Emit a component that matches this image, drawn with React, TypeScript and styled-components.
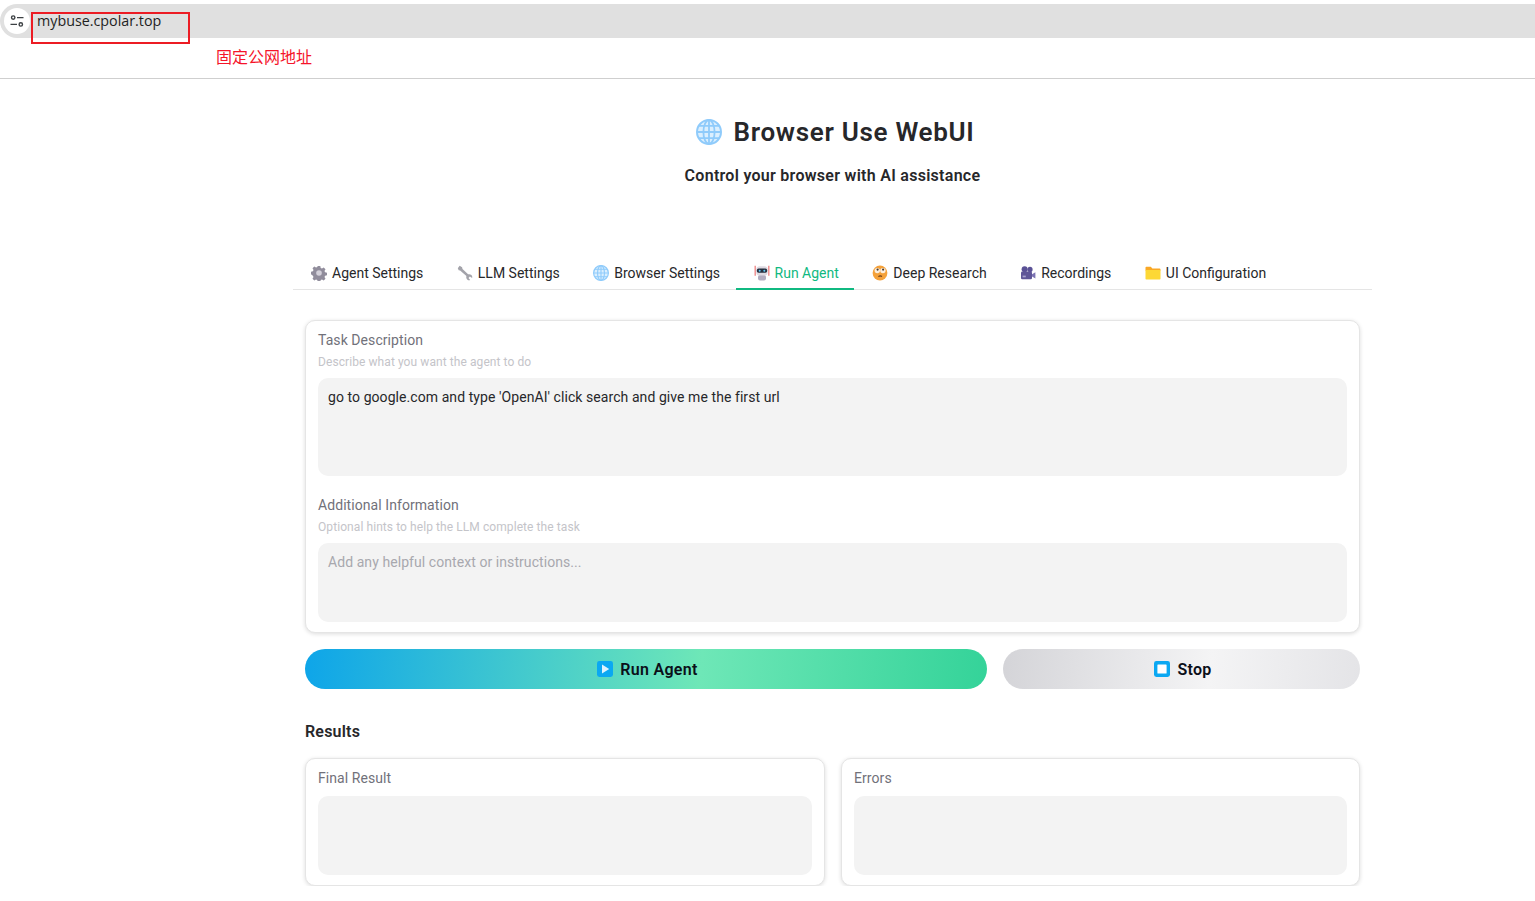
import React from "react";
import styled, { createGlobalStyle } from "styled-components";

const GlobalStyle = createGlobalStyle`
  html, body {
    margin: 0;
    padding: 0;
    background: #fff;
    overflow: hidden;
  }
  * {
    box-sizing: border-box;
  }
  body {
    font-family: Roboto, "Noto Sans", "Noto Sans CJK SC", sans-serif;
    color: #27272a;
  }
`;

const TopStrip = styled.div`
  position: relative;
  height: 79px;
  padding-top: 4px;
  border-bottom: 1px solid #cfcfcf;
`;

const AddressBar = styled.div`
  height: 34px;
  background: #e0e0e0;
  border-radius: 17px 0 0 17px;
  display: flex;
  align-items: center;
  gap: 8px;
  padding-left: 4px;
`;

const SiteButton = styled.div`
  width: 26px;
  height: 26px;
  border-radius: 50%;
  background: #fff;
  display: flex;
  align-items: center;
  justify-content: center;
`;

const Url = styled.div`
  font-family: "Open Sans", sans-serif;
  font-size: 14.3px;
  line-height: 20px;
  color: #1f1f1f;
  margin-top: -1px;
  margin-left: -1px;
`;

const RedBox = styled.div`
  position: absolute;
  left: 31px;
  top: 12px;
  width: 159px;
  height: 32px;
  border: 2px solid #ec1c24;
`;

const Note = styled.div`
  font-family: "Noto Sans CJK SC", sans-serif;
  font-size: 16px;
  line-height: 20px;
  color: #f5142a;
  margin: 8px 0 0 216px;
`;

const Main = styled.main`
  width: 1079px;
  margin-left: 293px;
`;

const Header = styled.header`
  height: 175px;
  padding-top: 36px;
  text-align: center;
`;

const Title = styled.h1`
  margin: 0;
  height: 34px;
  padding-left: 5px;
  display: flex;
  align-items: center;
  justify-content: center;
  gap: 12px;
  font-size: 26px;
  font-weight: 600;
  line-height: 34px;
  letter-spacing: 0.7px;
  color: #27272a;
`;

const Subtitle = styled.p`
  margin: 15px 0 0;
  font-size: 16px;
  font-weight: 600;
  line-height: 24px;
  letter-spacing: 0.28px;
  color: #27272a;
`;

const Tabs = styled.nav`
  display: flex;
  height: 36px;
  border-bottom: 1px solid #e5e5e5;
`;

const Tab = styled.div<{ $active?: boolean }>`
  height: 36px;
  padding: 4px 15.5px 0 18px;
  display: flex;
  align-items: center;
  gap: 5px;
  font-size: 14px;
  line-height: 20px;
  white-space: nowrap;
  color: ${({ $active }) => ($active ? "#10b981" : "#27272a")};
  border-bottom: 2px solid ${({ $active }) => ($active ? "#10b981" : "transparent")};
`;

const Content = styled.div`
  padding: 30px 12px 0;
`;

const Card = styled.section`
  background: #fff;
  border: 1px solid #e5e5e5;
  border-radius: 10px;
  box-shadow: 0 1px 4px rgba(0, 0, 0, 0.14);
  padding: 11px 12px 10px;
`;

const Label = styled.div`
  font-size: 14px;
  line-height: 16px;
  letter-spacing: 0.07px;
  color: #71717a;
`;

const Info = styled.div`
  font-size: 12px;
  line-height: 16px;
  letter-spacing: 0.08px;
  margin-top: 6px;
  color: #c4c4c9;
`;

const Field = styled.div<{ $height: number; $muted?: boolean }>`
  height: ${({ $height }) => $height}px;
  margin-top: 8px;
  padding: 10px;
  background: #f3f3f3;
  border-radius: 10px;
  font-size: 14px;
  line-height: 18px;
  letter-spacing: 0.07px;
  color: ${({ $muted }) => ($muted ? "#a8a8ae" : "#27272a")};
`;

const OutputBox = styled(Field)`
  margin-top: 10px;
`;

const Block = styled.div`
  margin-top: 21px;
`;

const Actions = styled.div`
  display: grid;
  grid-template-columns: 682px 357px;
  gap: 16px;
  margin-top: 16px;
`;

const ActionButton = styled.button<{ $primary?: boolean }>`
  height: 40px;
  border: 0;
  border-radius: 20px;
  padding: 0 0 0 3px;
  display: flex;
  align-items: center;
  justify-content: center;
  gap: 7px;
  font-family: inherit;
  font-size: 16px;
  font-weight: 600;
  letter-spacing: 0.3px;
  color: #0b0f19;
  background: ${({ $primary }) =>
    $primary
      ? "linear-gradient(95deg, #0ea5e9, #6ee7b7 58%, #34d399)"
      : "linear-gradient(95deg, #d4d4d8, #f4f4f5 58%, #e4e4e7)"};
`;

const SectionTitle = styled.h2`
  margin: 33px 0 0;
  font-size: 16px;
  font-weight: 600;
  line-height: 20px;
  letter-spacing: 0.2px;
  color: #27272a;
`;

const ResultGrid = styled.div`
  display: grid;
  grid-template-columns: 520px 519px;
  gap: 16px;
  margin-top: 16px;
`;

const GearIcon = () => (
  <svg width="16" height="16" viewBox="0 0 16 16">
    <path
      fill="#918d9c"
      d="M6.7 1h2.6l.4 1.9 1.3.6 1.7-1 1.8 1.8-1 1.7.6 1.3 1.9.4v2.6l-1.9.4-.6 1.3 1 1.7-1.8 1.8-1.7-1-1.3.6-.4 1.9H6.7l-.4-1.9-1.3-.6-1.7 1-1.8-1.8 1-1.7-.6-1.3L0 9.3V6.7l1.9-.4.6-1.3-1-1.7 1.8-1.8 1.7 1 1.3-.6z"
    />
    <circle cx="8" cy="8" r="2.8" fill="#d4d1da" />
  </svg>
);

const WrenchIcon = () => (
  <svg width="16" height="16" viewBox="0 0 16 16">
    <path
      fill="#a3a3aa"
      d="M.8 3.2 2.6.8l2.5 1.5.4 1.6 5.6 5.4c1.2-.4 2.4-.1 3.3.8.8.8 1.1 1.9.7 3l-2.2-1.6-1.4 1.5 1.7 2.1c-1.1.4-2.2.1-3-.7-.9-.9-1.2-2.2-.8-3.4L3.1 5.6 1.7 5.2z"
    />
  </svg>
);

const GlobeIcon = ({ size }: { size: number }) => (
  <svg width={size} height={size} viewBox="0 0 26 26" fill="none">
    <circle cx="13" cy="13" r="12" fill="#dbeffe" stroke="#8fcbfb" strokeWidth="2" />
    <ellipse cx="13" cy="13" rx="5.6" ry="12" stroke="#8fcbfb" strokeWidth="1.8" />
    <path d="M13 1v24M1 13h24M3 6.8h20M3 19.2h20" stroke="#8fcbfb" strokeWidth="1.8" />
  </svg>
);

const RobotIcon = () => (
  <svg width="16" height="16" viewBox="0 0 16 16">
    <path d="M1.2 .8v10M14.8 .8v10" stroke="#ef8a8a" strokeWidth="1.4" />
    <rect x="4" y="10" width="8" height="5.6" rx="2" fill="#b3adc0" />
    <rect x="2.2" y="1.2" width="11.6" height="9.4" rx="3.6" fill="#dedae2" />
    <rect x="2.8" y="3.6" width="10.4" height="4.2" rx="1.8" fill="#26303f" />
    <circle cx="5.7" cy="5.7" r="1" fill="#5fc8f5" />
    <circle cx="10.3" cy="5.7" r="1" fill="#5fc8f5" />
  </svg>
);

const FaceIcon = () => (
  <svg width="16" height="16" viewBox="0 0 16 16">
    <circle cx="8" cy="8" r="7.4" fill="#f4a13a" />
    <circle cx="5.3" cy="5.6" r="2.7" fill="#fbeede" />
    <circle cx="10.9" cy="5.6" r="2.7" fill="#fbeede" />
    <circle cx="5.6" cy="4.6" r="1.1" fill="#4a3a30" />
    <circle cx="11.1" cy="4.6" r="1.1" fill="#4a3a30" />
    <path d="M6.4 11.6c1-.9 2.3-1 3.6-.2" stroke="#6b3d1c" strokeWidth="1.2" fill="none" />
  </svg>
);

const CameraIcon = () => (
  <svg width="16" height="16" viewBox="0 0 16 16">
    <circle cx="4.6" cy="4.2" r="3" fill="#5a5196" />
    <circle cx="10" cy="4.4" r="2.6" fill="#5a5196" />
    <rect x="1" y="6.6" width="11" height="7.6" rx="1.2" fill="#5f5698" />
    <path d="M12 9.2l3.4-2v6.4L12 11.6z" fill="#7d74b3" />
    <rect x="2.6" y="10.6" width="3.2" height="1.7" fill="#a9a2d0" />
  </svg>
);

const FolderIcon = () => (
  <svg width="16" height="16" viewBox="0 0 16 16">
    <path d="M.5 2.6c0-.5.4-.9.9-.9h4.4l1.6 1.8h7.2c.5 0 .9.4.9.9v1.4H.5z" fill="#f9a825" />
    <rect x=".5" y="5" width="15" height="9.6" rx=".8" fill="#fdd835" />
  </svg>
);

const PlayIcon = () => (
  <svg width="16" height="16" viewBox="0 0 16 16">
    <rect width="16" height="16" rx="2.4" fill="#0ba8f2" />
    <path d="M5 3.4 12.2 8 5 12.6z" fill="#dff3fe" />
  </svg>
);

const StopIcon = () => (
  <svg width="16" height="16" viewBox="0 0 16 16">
    <rect width="16" height="16" rx="2.4" fill="#0ba8f2" />
    <rect x="3.4" y="3.4" width="9.2" height="9.2" rx=".6" fill="#fff" />
  </svg>
);

const SiteIcon = () => (
  <svg width="16" height="16" viewBox="0 0 16 16" fill="none" stroke="#3c4043" strokeWidth="1.4">
    <circle cx="4.2" cy="4.6" r="1.7" />
    <circle cx="11.8" cy="11.4" r="1.7" />
    <path d="M8 4.6h6.5M1.5 11.4H8" />
  </svg>
);

const tabs = [
  { label: "Agent Settings", icon: <GearIcon /> },
  { label: "LLM Settings", icon: <WrenchIcon /> },
  { label: "Browser Settings", icon: <GlobeIcon size={16} /> },
  { label: "Run Agent", icon: <RobotIcon />, active: true },
  { label: "Deep Research", icon: <FaceIcon /> },
  { label: "Recordings", icon: <CameraIcon /> },
  { label: "UI Configuration", icon: <FolderIcon /> },
];

const App = () => {
  return (
    <>
      <GlobalStyle />
      <TopStrip>
        <AddressBar>
          <SiteButton>
            <SiteIcon />
          </SiteButton>
          <Url>mybuse.cpolar.top</Url>
        </AddressBar>
        <Note>固定公网地址</Note>
        <RedBox />
      </TopStrip>
      <Main>
        <Header>
          <Title>
            <GlobeIcon size={26} />
            Browser Use WebUI
          </Title>
          <Subtitle>Control your browser with AI assistance</Subtitle>
        </Header>
        <Tabs>
          {tabs.map((tab) => (
            <Tab key={tab.label} $active={tab.active}>
              {tab.icon}
              {tab.label}
            </Tab>
          ))}
        </Tabs>
        <Content>
          <Card>
            <Label>Task Description</Label>
            <Info>Describe what you want the agent to do</Info>
            <Field $height={98}>
              go to google.com and type 'OpenAI' click search and give me the first url
            </Field>
            <Block>
              <Label>Additional Information</Label>
              <Info>Optional hints to help the LLM complete the task</Info>
              <Field $height={79} $muted>
                Add any helpful context or instructions...
              </Field>
            </Block>
          </Card>
          <Actions>
            <ActionButton $primary>
              <PlayIcon />
              Run Agent
            </ActionButton>
            <ActionButton>
              <StopIcon />
              Stop
            </ActionButton>
          </Actions>
          <SectionTitle>Results</SectionTitle>
          <ResultGrid>
            <Card>
              <Label>Final Result</Label>
              <OutputBox $height={79} />
            </Card>
            <Card>
              <Label>Errors</Label>
              <OutputBox $height={79} />
            </Card>
          </ResultGrid>
        </Content>
      </Main>
    </>
  );
};

export default App;
